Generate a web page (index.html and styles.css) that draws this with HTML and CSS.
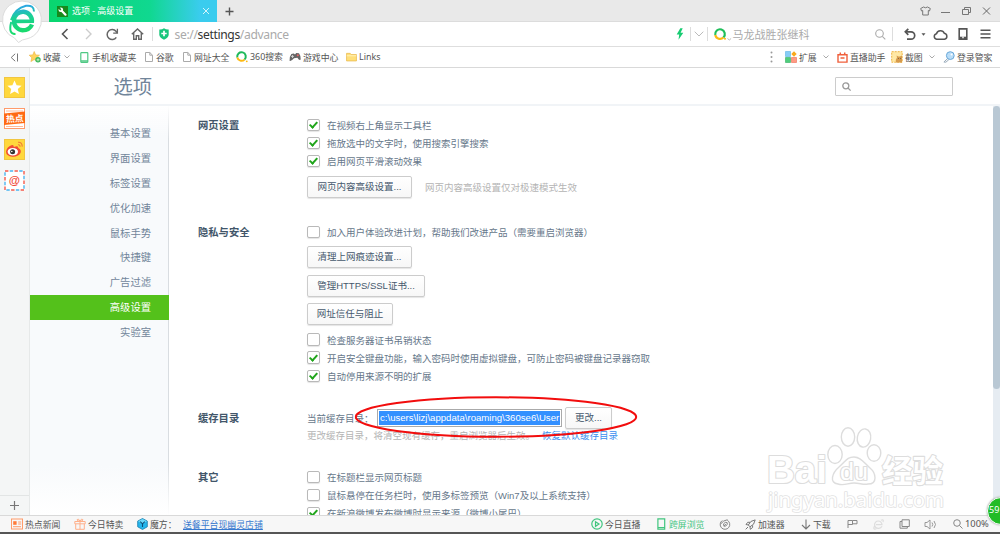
FILE: index.html
```
<!DOCTYPE html>
<html lang="zh-CN">
<head>
<meta charset="utf-8">
<title>选项 - 高级设置</title>
<link rel="stylesheet" href="styles.css">
</head>
<body>
<div class="window">
  <header class="titlebar">
    <div class="tab">
      <svg width="11" height="11" viewBox="0 0 11 11"><rect width="11" height="11" fill="#178a1c"/><path d="M3.5 3.5 8.5 8.7" stroke="#fff" stroke-width="2.2" stroke-linecap="round"/><circle cx="3.8" cy="3.7" r="2.3" fill="#fff"/><path d="M1 1.2 3.8 3.8" stroke="#178a1c" stroke-width="1.6"/></svg>
      <span class="tab-title">选项 - 高级设置</span>
      <svg width="8" height="8" viewBox="0 0 8 8"><path d="M1 1l6 6M7 1L1 7" stroke="#d5f5fa" stroke-width="1"/></svg>
    </div>
    <svg class="new-tab" width="9" height="9" viewBox="0 0 9 9"><path d="M4.5 .5v8M.5 4.5h8" stroke="#555" stroke-width="1.4"/></svg>
    <div class="window-buttons">
      <svg width="11" height="10" viewBox="0 0 11 10" fill="none" stroke="#777"><path d="M3.5 1Q5.5 2.5 7.5 1L10.3 2.5 9.5 5 8.3 4.5V9H2.7V4.5L1.5 5 .7 2.5z"/></svg>
      <svg width="11" height="10" viewBox="0 0 11 10"><path d="M1 6.5h9" stroke="#777"/></svg>
      <svg width="11" height="10" viewBox="0 0 11 10" fill="none" stroke="#777"><path d="M1.5 3.5h6v5h-6zM3.5 3V1.5h6v5H8"/></svg>
      <svg width="11" height="10" viewBox="0 0 11 10"><path d="M2 1.5l7 7M9 1.5l-7 7" stroke="#666"/></svg>
    </div>
  </header>

  <div class="addressbar">
    <svg width="8" height="12" viewBox="0 0 8 12" fill="none" stroke="#555" stroke-width="1.6"><path d="M6.5 1 1.5 6l5 5"/></svg>
    <svg width="8" height="12" viewBox="0 0 8 12" fill="none" stroke="#ccc" stroke-width="1.4"><path d="M1 1l5 5-5 5"/></svg>
    <svg width="14" height="13" viewBox="0 0 14 13" fill="none" stroke="#666" stroke-width="1.5"><path d="M11.3 9.3A5 5 0 1 1 11 3.3L12 4.7"/><path d="M12.4.8v4.4H8.2" stroke-width="1.3"/></svg>
    <svg width="13" height="12" viewBox="0 0 13 12" fill="none" stroke="#666" stroke-width="1.4"><path d="M.8 6.2 6.5.9l5.7 5.3M2.7 5v6.2h2.6V7.8h2.4v3.4h2.6V5"/></svg>
    <i class="divider"></i>
    <svg width="10" height="12" viewBox="0 0 10 12"><path d="M.3 1.4Q3 1.6 5 .2 7 1.6 9.7 1.4V7Q9 10 5 11.8 1 10 .3 7z" fill="#18c67c"/><path d="M5 2.8v5.4M2.3 5.5h5.4" stroke="#fff" stroke-width="1.7"/></svg>
    <span class="url">se://<b>settings</b>/advance</span>
    <svg width="8" height="12" viewBox="0 0 8 12"><path d="M4.3.2.7 6.6h2.5L2.5 11.7 7.3 4.7H4.6L6.7.2z" fill="#17cc72"/></svg>
    <i class="divider"></i>
    <svg width="10" height="6" viewBox="0 0 10 6" fill="none" stroke="#bbb"><path d="M.7.7 5 5 9.3.7"/></svg>
    <i class="divider"></i>
    <svg width="18" height="13" viewBox="0 0 18 13" fill="none"><path d="M1.3 7A4.8 4.8 0 1 1 9.4 9.5" stroke="#1fbf5b" stroke-width="2.2"/><path d="M1.3 7A4.8 4.8 0 0 0 9.4 9.5" stroke="#fdb913" stroke-width="2.2"/><circle cx="11" cy="10.8" r="1" fill="#fdb913"/><path d="M13.5 10.5l1.8 1.5 1.8-1.5" stroke="#bbb"/></svg>
    <span class="query">马龙战胜张继科</span>
    <svg width="11" height="11" viewBox="0 0 11 11" fill="none" stroke="#aaa" stroke-width="1.1"><circle cx="4.5" cy="4.5" r="3.8"/><path d="M7.3 7.3l3 3"/></svg>
    <i class="divider"></i>
    <svg width="12" height="13" viewBox="0 0 12 13" fill="none" stroke="#555" stroke-width="1.7"><path d="M1.5 3.8H7a3.6 3.6 0 0 1 0 7.4H3"/><path d="M4.3.8 1.3 3.8l3 3"/></svg>
    <svg width="5" height="3" viewBox="0 0 5 3"><path d="M.5.3h4L2.5 2.8z" fill="#555"/></svg>
    <svg width="15" height="11" viewBox="0 0 15 11" fill="none" stroke="#555" stroke-width="1.5"><path d="M3.6 10.2A2.8 2.8 0 0 1 3.5 4.7 4.1 4.1 0 0 1 11.3 4.3 3 3 0 0 1 11.5 10.2z"/></svg>
    <svg width="10" height="12" viewBox="0 0 10 12" fill="none" stroke="#555" stroke-width="1.6"><path d="M1.2.9h7.6v10.2H1.2z"/><path d="M1 9.9h8" stroke-width="2.4"/><path d="M4.3 9.4h1.4" stroke="#fff"/></svg>
    <svg width="11" height="10" viewBox="0 0 11 10"><path d="M.5 1.2h10M.5 5h10M.5 8.8h10" stroke="#555" stroke-width="1.6"/></svg>
  </div>

  <nav class="bookmarks">
    <div class="bm-left">
      <span class="bm"><svg width="9" height="9" viewBox="0 0 9 9" fill="none" stroke="#777"><path d="M5.2.8 1.2 4.5l4 3.7M7.5.5v8"/></svg></span>
      <span class="bm"><svg width="12" height="12" viewBox="0 0 12 12"><path d="M5.2.5 6.7 3.9l3.8.3-2.9 2.6.9 3.8-3.3-2-3.3 2 .9-3.8L.2 4.2 3.8 3.9z" fill="#ffd45c" stroke="#eab03a" stroke-width=".6"/><circle cx="9" cy="8.8" r="2.7" fill="#3cb75b"/><path d="M9 7.3v3M7.5 8.8h3" stroke="#dff5d7" stroke-width=".8"/></svg>收藏<svg class="chev" width="6" height="4" viewBox="0 0 6 4" fill="none" stroke="#aaa"><path d="M.5.5 3 3 5.5.5"/></svg></span>
      <span class="bm bm-phone"><svg width="9" height="11" viewBox="0 0 9 11"><rect x=".8" y=".7" width="7" height="9.6" rx=".5" fill="#fff" stroke="#4fc884" stroke-width="1.2"/><path d="M1 9h7" stroke="#4fc884" stroke-width="1.5"/></svg>手机收藏夹</span>
      <span class="bm bm-page"><svg width="8" height="10" viewBox="0 0 8 10" fill="#fff" stroke="#aaa"><path d="M.5.5h4.3l2.7 2.7v6.3h-7zM4.8.5v2.7h2.7"/></svg>谷歌</span>
      <span class="bm bm-page"><svg width="8" height="10" viewBox="0 0 8 10" fill="#fff" stroke="#aaa"><path d="M.5.5h4.3l2.7 2.7v6.3h-7zM4.8.5v2.7h2.7"/></svg>网址大全</span>
      <span class="bm"><svg width="12" height="12" viewBox="0 0 12 12" fill="none"><path d="M1.3 6.5A4.3 4.3 0 1 1 8.5 8.6" stroke="#1fb95b" stroke-width="2"/><path d="M1.3 6.5A4.3 4.3 0 0 0 8.5 8.6" stroke="#fdb913" stroke-width="2"/><circle cx="10.8" cy="10.3" r=".9" fill="#fdb913"/></svg><span class="latin">360搜索</span></span>
      <span class="bm"><svg width="12" height="10" viewBox="0 0 12 10"><path d="M2.4 2 4.8 1.5 6 2.5 7.2 1 10 1.3Q12 4 11.7 7.5 10.5 9 8.4 5.8L5 6.2Q2 9.7.6 8.8 0 5 2.4 2z" fill="#666"/><circle cx="8.8" cy="3.3" r="1" fill="#e66"/><path d="M2 4.4h3M3.5 3v3" stroke="#ddd" stroke-width=".8"/></svg>游戏中心</span>
      <span class="bm"><svg width="11" height="10" viewBox="0 0 12 10"><path d="M.6 1h4l1 1.3h5.8v7H.6z" fill="#ffdf79" stroke="#e9b84b" stroke-width=".8"/><path d="M.8 3.7h10.4" stroke="#fff3bf"/></svg><span class="latin">Links</span></span>
    </div>
    <div class="bm-right">
      <span class="bm"><svg width="3" height="12" viewBox="0 0 3 12" fill="#999"><circle cx="1.5" cy="1.5" r="1"/><circle cx="1.5" cy="6" r="1"/><circle cx="1.5" cy="10.5" r="1"/></svg></span>
      <span class="bm"><svg width="12" height="12" viewBox="0 0 12 12"><path d="M.5.5h5v5h-5z" fill="#87cdf6" stroke="#5ab2e6" stroke-width=".6"/><path d="M.5 6.5h5v5h-5z" fill="#4fcd7c" stroke="#31af60" stroke-width=".6"/><path d="M6.5 6.5h5v5h-5z" fill="#ff9a83" stroke="#ed6b54" stroke-width=".6"/><path d="M9 .2 11.7 3 9 5.7 6.3 3z" fill="#f8a91c"/></svg>扩展<svg class="chev far" width="6" height="4" viewBox="0 0 6 4" fill="none" stroke="#aaa"><path d="M.5.5 3 3 5.5.5"/></svg></span>
      <span class="bm bm-live"><svg width="11" height="11" viewBox="0 0 11 11" fill="none" stroke="#f0603c" stroke-width="1.4"><path d="M1 2.7h9v7.4H1zM3 .5l.6 2M8 .5l-.6 2M3.5 6h4"/></svg>直播助手</span>
      <span class="bm"><svg width="12" height="12" viewBox="0 0 12 12"><rect x=".7" y=".7" width="10.5" height="10.5" fill="#ffe8a5" stroke="#efb340" stroke-dasharray="2 1"/><path d="M5 11.5Q4.5 8 6 6.5L5.5 4.5 7.4 5.5h1.5L11 4.5v7z" fill="#d69a4c"/><path d="M7 7.5h.7M9 7.5h.7" stroke="#654"/></svg>截图<svg class="chev far" width="6" height="4" viewBox="0 0 6 4" fill="none" stroke="#aaa"><path d="M.5.5 3 3 5.5.5"/></svg></span>
      <span class="bm"><svg width="12" height="12" viewBox="0 0 12 12" fill="none"><path d="M5 7.2.9 11l2 .2 3-2.6" stroke="#9aabbb"/><circle cx="7.3" cy="4.6" r="3.9" fill="#b9ddf8" stroke="#69a8d8"/><circle cx="8.6" cy="3.5" r="1" fill="#fff"/></svg>登录管家</span>
    </div>
  </nav>

  <div class="body">
    <aside class="strip">
      <svg width="21" height="21" viewBox="0 0 21 21"><rect x=".5" y=".5" width="20" height="20" fill="#ffd83d" stroke="#f1c640"/><path d="M10.5 3.5l2.1 4.7 5 .5-3.8 3.4 1.1 5-4.4-2.6-4.4 2.6 1.1-5-3.8-3.4 5-.5z" fill="#fff"/></svg>
      <svg width="21" height="21" viewBox="0 0 21 21"><rect x=".5" y=".5" width="20" height="20" fill="#fff" stroke="#ff9b6b"/><path d="M2 3h17M2 18.5h17" stroke="#ffbc9a"/><path d="M0 5.5 21 3.5V15L0 17z" fill="#ff6a13"/><text x="2" y="13.8" font-size="8.7" font-weight="700" fill="#fff" transform="rotate(-3 10 10)">热点</text></svg>
      <svg width="21" height="21" viewBox="0 0 21 21"><rect x=".5" y=".5" width="20" height="20" fill="#ffd83d" stroke="#f1c640"/><path d="M2 12.5Q3 7.5 7.5 6.2 10 5.6 9.8 8 14.5 6 14.3 9 17.7 10.5 16.5 14 14 18 8.5 17.8 2 17 2 12.5z" fill="#f04b37"/><ellipse cx="8.8" cy="12.7" rx="5.2" ry="3.8" fill="#fff"/><circle cx="8.6" cy="12.8" r="2.5" fill="#333"/><circle cx="7.8" cy="12.5" r=".8" fill="#fff"/><path d="M14 3.3q4-.4 4.3 4.3M14 5.7q2-.2 2.1 2.1" fill="none" stroke="#f07b37" stroke-width="1.1"/></svg>
      <svg width="21" height="21" viewBox="0 0 21 21"><rect x=".5" y=".5" width="20" height="20" fill="#fff"/><rect x="1" y="1" width="19" height="19" fill="none" stroke="#f45a4b" stroke-width="1.4" stroke-dasharray="3.4 6.1"/><rect x="1" y="1" width="19" height="19" fill="none" stroke="#4ab4ef" stroke-width="1.4" stroke-dasharray="3.4 6.1" stroke-dashoffset="-4.75"/><text x="10.4" y="13.8" text-anchor="middle" font-size="11.5" font-weight="700" fill="#f04b3a">@</text></svg>
      <div class="strip-add"><svg width="9" height="9" viewBox="0 0 9 9"><path d="M4.5 0v9M0 4.5h9" stroke="#777" stroke-width="1.2"/></svg></div>
    </aside>
    <section class="page">
      <div class="page-head">
        <h1>选项</h1>
        <div class="search"><svg width="9" height="9" viewBox="0 0 9 9" fill="none" stroke="#999" stroke-width="1.3"><circle cx="3.8" cy="3.8" r="3"/><path d="M6 6l2.6 2.6"/></svg></div>
      </div>
      <div class="page-body">
        <ul class="menu">
          <li>基本设置</li><li>界面设置</li><li>标签设置</li><li>优化加速</li><li>鼠标手势</li><li>快捷键</li><li>广告过滤</li><li class="active">高级设置</li><li>实验室</li>
        </ul>
        <main class="settings">
          <section class="group web">
            <h2>网页设置</h2>
            <div>
              <label class="opt"><i class="box on"></i>在视频右上角显示工具栏</label>
              <label class="opt"><i class="box on"></i>拖放选中的文字时，使用搜索引擎搜索</label>
              <label class="opt"><i class="box on"></i>启用网页平滑滚动效果</label>
              <div class="btn-row"><span class="btn">网页内容高级设置...</span><span class="note">网页内容高级设置仅对极速模式生效</span></div>
            </div>
          </section>
          <section class="group privacy">
            <h2>隐私与安全</h2>
            <div>
              <label class="opt"><i class="box"></i>加入用户体验改进计划，帮助我们改进产品（需要重启浏览器）</label>
              <div class="btn-row"><span class="btn">清理上网痕迹设置...</span></div>
              <div class="btn-row"><span class="btn wide">管理HTTPS/SSL证书...</span></div>
              <div class="btn-row"><span class="btn trust">网址信任与阻止</span></div>
              <label class="opt"><i class="box"></i>检查服务器证书吊销状态</label>
              <label class="opt"><i class="box on"></i>开启安全键盘功能，输入密码时使用虚拟键盘，可防止密码被键盘记录器窃取</label>
              <label class="opt"><i class="box on"></i>自动停用来源不明的扩展</label>
            </div>
          </section>
          <section class="group cache">
            <h2>缓存目录</h2>
            <div>
              <div class="path-row"><span class="path-label">当前缓存目录：</span><span class="path"><span class="selected">c:\users\lizj\appdata\roaming\360se6\User</span></span><span class="btn change">更改...</span></div>
              <div class="hint">更改缓存目录，将清空现有缓存，重启浏览器后生效。<a>恢复默认缓存目录</a></div>
            </div>
          </section>
          <section class="group">
            <h2>其它</h2>
            <div>
              <label class="opt"><i class="box"></i>在标题栏显示网页标题</label>
              <label class="opt"><i class="box"></i>鼠标悬停在任务栏时，使用多标签预览（Win7及以上系统支持）</label>
              <label class="opt"><i class="box on"></i>在新浪微博发布微博时显示来源（微博小尾巴）</label>
            </div>
          </section>
        </main>
        <div class="scrollbar"><div class="thumb"></div></div>
      </div>
    </section>
  </div>

  <footer class="status">
    <div class="st-left">
      <span class="st"><svg width="12" height="12" viewBox="0 0 12 12" fill="none" stroke="#ff9c6a"><rect x=".5" y="1" width="11" height="10"/><path d="M7.2 4h3M7.2 6h3M2 8.7h8"/><path d="M2.2 3.2h3.4v3.6H2.2z" fill="#ff7a38" stroke="none"/></svg>热点新闻</span>
      <span class="st"><svg width="12" height="12" viewBox="0 0 12 12" fill="none" stroke="#ffb08a"><path d="M.8 3.5h10.4v2.3H.8zM1.7 6v5.3h8.6V6M6 3.5v8M6 3.3Q3 3.5 3.2 1.5 4.5 0 6 3.3 7.5 0 8.8 1.5 9 3.5 6 3.3"/></svg>今日特卖</span>
      <span class="st"><svg width="11" height="12" viewBox="0 0 11 12"><path d="M5.5.5l4.8 2.6v5.7L5.5 11.5.7 8.8V3.1z" fill="#25b5ec" stroke="#187ba9" stroke-width=".8"/><path d="M5.5.9 10 3.2 5.5 5.7 1 3.2z" fill="#6dd7f8"/><path d="M3.2 3.7l2.3 2.1 2.3-2.1M5.5 5.8V9" fill="none" stroke="#0d4f77" stroke-width="1.1"/></svg>魔方：</span>
      <a class="st st-link">送餐平台现幽灵店铺</a>
    </div>
    <div class="st-right">
      <span class="st"><svg width="12" height="12" viewBox="0 0 12 12" fill="none" stroke="#41c57e" stroke-width="1.2"><circle cx="6" cy="6" r="5.2"/><path d="M4.5 3.7 8 6 4.5 8.3z"/></svg>今日直播</span>
      <span class="st green"><svg width="9" height="12" viewBox="0 0 9 12" fill="none" stroke="#41c57e" stroke-width="1.2"><path d="M.9.8h6.8v10.4H.9zM1 9.5h6.5"/></svg>跨屏浏览</span>
      <span class="st"><svg width="12" height="11" viewBox="0 0 12 11" fill="none" stroke="#888"><path d="M3.3 1.5A4.8 4.8 0 1 0 8.3 1.3M1.8 4.8Q4.5 1.2 8.5.7M5 7.2Q3.3 4.5 6.3 3.4 9 2.8 8.3 5.5 7 7.5 5 7.2L6.8 5"/></svg></span>
      <span class="st"><svg width="11" height="11" viewBox="0 0 11 11" fill="none" stroke="#777"><path d="M3.3 6Q5 1.5 10.2.9 9.5 6 5 7.8zM3.3 6 1 5.5 2.7 3.3H5M5 7.8l.3 2.5 2.3-1.8V6.3M3 8 .7 10.3"/></svg>加速器</span>
      <span class="st"><svg width="10" height="11" viewBox="0 0 10 11" fill="none" stroke="#777" stroke-width="1.1"><path d="M5 .5v9M1 6l4 4 4-4"/></svg>下载</span>
      <span class="st"><svg width="11" height="10" viewBox="0 0 11 10" fill="none" stroke="#888"><path d="M1 9V1.5h4.5v4H1M5.5 1.5H10v3.3H5.5"/></svg></span>
      <span class="st"><svg width="11" height="11" viewBox="0 0 11 11" fill="none" stroke="#ddd" stroke-width="1.2"><path d="M9 7.3Q8 9.5 5.5 9.4A3.7 3.7 0 1 1 9 5.7H3M8 1.3Q11-.3 10 3M1.5 7Q-.5 11 3.3 9.8"/></svg></span>
      <span class="st"><svg width="11" height="10" viewBox="0 0 11 10" fill="none" stroke="#888"><path d="M3 .8h7.3v6.7H3zM3 2.5H1v6.7h7.3V7.5"/></svg></span>
      <span class="st"><svg width="13" height="11" viewBox="0 0 13 11" fill="none" stroke="#999"><path d="M1 3.5h2L6 1v9L3 7.5H1zM8 3.5q1.5 2 0 4M10 2q3 3.5 0 7"/></svg></span>
      <span class="st zoom-level"><svg width="10" height="10" viewBox="0 0 10 10" fill="none" stroke="#888"><circle cx="4" cy="4" r="3.3"/><path d="M6.5 6.5l3 3"/></svg>100%</span>
    </div>
  </footer>
  <div class="desktop-edge"></div>

  <svg class="logo" width="42" height="44" viewBox="0 0 42 44">
    <defs><linearGradient id="e" gradientUnits="userSpaceOnUse" x1="18" y1="6" x2="22" y2="34"><stop offset="0" stop-color="#2ba5e8"/><stop offset=".4" stop-color="#1bd096"/><stop offset="1" stop-color="#18dc67"/></linearGradient></defs>
    <path d="M21 1a19.2 19.2 0 0 1 5 37.8Q21 39.3 17.5 42.5L13.5 38A19.2 19.2 0 0 1 21 1z" fill="#fff" stroke="#dcdcdc"/>
    <g fill="none" stroke="url(#e)"><path d="M31 24.5Q28.5 30.3 21.5 30.3A9 9.3 0 1 1 30.9 22" stroke-width="4.4"/><path d="M15 21.4L33 21.3" stroke-width="3.6"/><path d="M10 20Q14 8.5 25 5.8 33 4.8 33 11.5M10.2 22Q7 34.5 14.5 34" stroke-width="2"/></g>
  </svg>

  <svg class="marker" width="284" height="44" viewBox="0 0 284 44"><ellipse cx="142" cy="22" rx="140.2" ry="19.7" fill="none" stroke="#f20d0d" stroke-width="2"/></svg>

  <svg class="watermark" width="184" height="92" viewBox="0 0 184 92">
    <g fill="#fff" stroke="#ddd" stroke-width="1.4">
      <ellipse cx="70" cy="28.5" rx="7.2" ry="9"/><ellipse cx="83" cy="11" rx="6.7" ry="9.2"/><ellipse cx="99" cy="12" rx="6.7" ry="9.2" transform="rotate(10 99 12)"/><ellipse cx="109" cy="27" rx="6.8" ry="8.3"/>
      <path d="M89 31C96 31 99 37 105 42S113 58 103 58C98 59 95 57 89 57S79 60 73 58C64 57 67 47 74 41S82 31 89 31z"/>
      <g class="outlined">
        <text x="2" y="56.5" font-size="39" textLength="60" lengthAdjust="spacingAndGlyphs" font-weight="700">Bai</text>
        <text x="75" y="54" font-size="23" textLength="28" lengthAdjust="spacingAndGlyphs">du</text>
        <text class="cjk" x="117" y="55.5" font-size="31" textLength="61" lengthAdjust="spacingAndGlyphs" font-weight="700">经验</text>
        <text class="site" x="3" y="81" font-size="19.5" textLength="176" lengthAdjust="spacingAndGlyphs">jingyan.baidu.com</text>
      </g>
    </g>
  </svg>
  <div class="badge">59</div>
</div>
</body>
</html>
```
FILE: styles.css
```
* { box-sizing: border-box; }
body {
  margin: 0;
  overflow: hidden;
  font-family: "Liberation Sans", "Noto Sans CJK SC", sans-serif;
  font-size: 9.5px;
  color: #66778a;
}
svg { display: block; flex: none; overflow: visible; }
h1, h2, ul { margin: 0; padding: 0; font-weight: normal; }
.window {
  position: relative;
  width: 1000px;
  height: 534px;
  display: flex;
  flex-direction: column;
  overflow: hidden;
  background: #fff;
}

/* Title bar */
.titlebar {
  height: 22px;
  flex: none;
  display: flex;
  align-items: center;
  padding-left: 49px;
  background: #e9e9e9;
  box-shadow: inset 0 -1px #dcdcdc;
}
.tab {
  width: 168px;
  height: 22px;
  display: flex;
  align-items: center;
  padding: 0 7px 0 8px;
  background: linear-gradient(90deg, #09d66f 0%, #10d890 60%, #3accee 90%);
  color: #fff;
  font-size: 9px;
}
.tab-title {
  margin-left: 4px;
  flex: 1;
  white-space: pre;
  font-family: "Noto Sans CJK SC", sans-serif;
  line-height: 12px;
}
.new-tab { margin-left: 8px; }
.window-buttons {
  margin-left: auto;
  margin-right: 8px;
  display: flex;
  gap: 9.5px;
}

/* Address bar */
.addressbar {
  height: 25px;
  flex: none;
  display: grid;
  align-items: center;
  grid-template-columns: 24.5px 19.5px 26px 21px 7px 16px 501px 14px 4px 13px 7px 19px 142px 17px 12px 17px 12px 25px 22px 12px;
  padding-left: 60.5px;
  border-bottom: 1px solid #dedede;
}
.divider { width: 1px; height: 14px; background: #ddd; }
.url {
  font: 12.1px "Noto Sans", sans-serif;
  letter-spacing: -.36px;
  line-height: 15px;
  color: #aaa;
}
.url b { font-weight: normal; color: #333; }
.query { font-size: 11px; color: #aaa; line-height: 14px; padding-top: 1px; }

/* Bookmarks */
.bookmarks {
  height: 21px;
  flex: none;
  display: flex;
  justify-content: space-between;
  border-bottom: 1px solid #d9d9d9;
  color: #555;
  font-size: 8.9px;
}
.bm-left, .bm-right { display: grid; align-items: center; }
.bm-left {
  grid-template-columns: 19px 51px 65px 38px 53px 53px 57px 50px;
  padding-left: 10px;
}
.bm-right {
  grid-template-columns: 15px 52px 54px 52px 57px;
}
.bm { display: flex; align-items: center; gap: 2px; white-space: nowrap; }
.bm-phone, .bm-page { gap: 3px; }
.latin { font-family: "Noto Sans", "Noto Sans CJK SC", sans-serif; line-height: 12px; }
.chev { margin-left: 1px; }
.chev.far { margin-left: 4px; }

/* Body */
.body { height: 447px; flex: none; display: flex; }
.strip {
  width: 30px;
  display: flex;
  flex-direction: column;
  gap: 10px;
  padding: 9px 0 0 3.5px;
  background: #f4f6f6;
  border-right: 1px solid #e6e9e9;
}
.strip-add {
  height: 20px;
  margin: auto 0 0 -3.5px;
  display: flex;
  align-items: center;
  justify-content: center;
  border-top: 1px solid #e2e5e5;
}
.page { width: 970px; display: flex; flex-direction: column; }
.page-head {
  height: 38px;
  flex: none;
  display: flex;
  align-items: center;
  justify-content: space-between;
  padding: 0 47px 0 83.5px;
  border-bottom: 2px solid #f1f4f7;
}
.page-head h1 { font-size: 19.3px; line-height: 28px; color: #71859a; padding-top: 4px; }
.search {
  width: 118px;
  height: 19px;
  display: flex;
  align-items: center;
  padding-left: 6px;
  border: 1px solid #ccc;
  border-radius: 1px;
}
.page-body { height: 409px; display: flex; }
.menu {
  width: 139px;
  padding-top: 15px;
  list-style: none;
  background: linear-gradient(#fff0, #f8fafc 30px, #f8fafc 360px, #fff);
  border-right: 1px solid;
  border-image: linear-gradient(#fff, #d9dde1 35px, #d9dde1 355px, #fff) 1;
}
.menu li {
  height: 24.9px;
  padding: 1px 17px 0 0;
  text-align: right;
  line-height: 24.9px;
  font-size: 10.3px;
  color: #71859a;
}
.menu .active {
  margin-right: -1px;
  padding-right: 18px;
  background: #54c11b;
  color: #fff;
}
.settings {
  width: 824px;
  padding: 10px 0 0 29px;
  overflow: hidden;
}
.group {
  display: grid;
  grid-template-columns: 109px 1fr;
  align-items: start;
}
.web { height: 107px; }
.privacy { height: 184px; }
.cache { height: 61px; }
.group h2 {
  padding-top: 1px;
  font-size: 10.3px;
  line-height: 18.2px;
  font-weight: 700;
  color: #42566a;
}
.cache h2 { padding-top: 0; line-height: 23px; }
.opt {
  height: 18.1px;
  display: flex;
  align-items: center;
  gap: 7.5px;
  white-space: nowrap;
}
.box {
  width: 12.5px;
  height: 12.5px;
  position: relative;
  border: 1px solid #b9b9b9;
  border-radius: 2px;
  background: #fff;
  box-shadow: 0 1px 1px #e4e4e4;
}
.on::after {
  content: "";
  position: absolute;
  left: 3.2px;
  top: .5px;
  width: 4.8px;
  height: 8px;
  box-sizing: border-box;
  border: solid #20a51b;
  border-width: 0 2px 2px 0;
  transform: rotate(42deg);
}
.btn-row {
  height: 22px;
  margin: 5px 0 6.5px;
  display: flex;
  align-items: center;
  gap: 13px;
}
.web .btn-row { margin-top: 6px; }
.privacy .btn-row + .btn-row { margin-top: 0; }
.privacy .btn-row + .opt { margin-top: -1px; }
.btn {
  width: 105px;
  height: 22px;
  border: 1px solid #ccc;
  border-radius: 2px;
  background: linear-gradient(#fff, #f7f7f7);
  box-shadow: 0 1px 1px #e5e5e5;
  text-align: center;
  line-height: 20px;
  color: #45586c;
  white-space: nowrap;
}
.wide { width: 118px; }
.trust { width: 86px; }
.note, .hint { color: #b4b4b4; }
.path-row { height: 22px; display: flex; align-items: center; }
.path-label { width: 70px; white-space: nowrap; }
.path {
  width: 185px;
  height: 18px;
  padding: 1px;
  border: 1px solid #aaa;
  background: #fff;
}
.selected {
  display: block;
  height: 14px;
  width: 181px;
  padding-left: 1px;
  overflow: hidden;
  background: #3390ff;
  color: #fff;
  font-size: 9.6px;
  line-height: 14px;
  white-space: nowrap;
}
.change { width: 47px; margin-left: 3px; }
.hint { line-height: 14px; white-space: nowrap; }
.hint a { margin-left: 7px; color: #3b8fef; }
.scrollbar { width: 7px; background: #e6ecf2; }
.thumb { height: 283px; border-radius: 4px; background: #b9c8d4; }

/* Status bar */
.status {
  height: 17px;
  flex: none;
  display: flex;
  justify-content: space-between;
  background: #f7f7f7;
  border-top: 1px solid #d9d9d9;
  font-size: 8.9px;
  color: #555;
}
.st-left, .st-right { display: grid; align-items: center; }
.st-left { padding-left: 11px; grid-template-columns: 63px 63px 46px 90px; }
.st-right { grid-template-columns: 66px 62px 26px 56px 46px 26px 26px 25px 29px 47px; }
.st { display: flex; align-items: center; gap: 2px; white-space: nowrap; }
.st-link { color: #3879cf; text-decoration: underline; }
.green { color: #41c57e; gap: 3px; }
.zoom-level { font-family: "Noto Sans", sans-serif; font-size: 9.3px; line-height: 12px; }
.desktop-edge { height: 2px; background: #555; }

/* Floating layers */
.logo { position: absolute; left: 1px; top: 0; }
.marker { position: absolute; left: 354px; top: 395px; }
.watermark { position: absolute; left: 765px; top: 426px; }
.watermark text { font-family: "Liberation Sans", sans-serif; }
.watermark .cjk { font-family: "Noto Sans CJK SC", sans-serif; }
.outlined { paint-order: stroke; stroke-width: 2.2px; stroke-linejoin: round; }
.watermark .site { font-family: "Noto Sans", sans-serif; stroke: #e2e2e2; stroke-width: 1.6px; }
.badge {
  position: absolute;
  left: 987px;
  top: 497px;
  width: 28px;
  height: 28px;
  padding-left: 1px;
  border: 1.5px solid #fff;
  border-radius: 50%;
  background: #22bc26;
  box-shadow: 0 0 2px #999;
  color: #fff;
  font: 9px/24px "Noto Sans", sans-serif;
}
```
